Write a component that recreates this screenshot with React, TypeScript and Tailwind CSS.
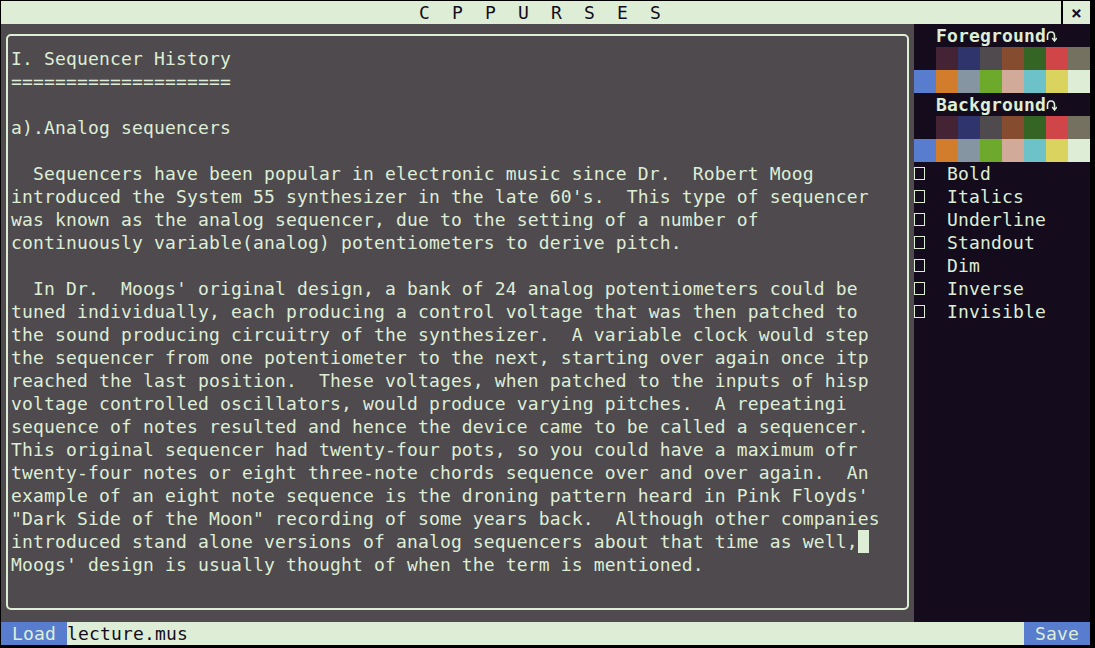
import React from 'react';

const lines = [
  'I. Sequencer History',
  '====================',
  '',
  'a).Analog sequencers',
  '',
  '  Sequencers have been popular in electronic music since Dr.  Robert Moog',
  "introduced the System 55 synthesizer in the late 60's.  This type of sequencer",
  'was known as the analog sequencer, due to the setting of a number of',
  'continuously variable(analog) potentiometers to derive pitch.',
  '',
  "  In Dr.  Moogs' original design, a bank of 24 analog potentiometers could be",
  'tuned individually, each producing a control voltage that was then patched to',
  'the sound producing circuitry of the synthesizer.  A variable clock would step',
  'the sequencer from one potentiometer to the next, starting over again once itp',
  'reached the last position.  These voltages, when patched to the inputs of hisp',
  'voltage controlled oscillators, would produce varying pitches.  A repeatingi',
  'sequence of notes resulted and hence the device came to be called a sequencer.',
  'This original sequencer had twenty-four pots, so you could have a maximum ofr',
  'twenty-four notes or eight three-note chords sequence over and over again.  An',
  "example of an eight note sequence is the droning pattern heard in Pink Floyds'",
  '"Dark Side of the Moon" recording of some years back.  Although other companies',
  'introduced stand alone versions of analog sequencers about that time as well,',
  "Moogs' design is usually thought of when the term is mentioned.",
];

const CURSOR_LINE = 21;

const darkRow = ['#140c1c', '#442434', '#30346d', '#4e4a4e', '#854c30', '#346524', '#d04648', '#757161'];
const lightRow = ['#597dce', '#d27d2c', '#8595a1', '#6daa2c', '#d2aa99', '#6dc2ca', '#dad45e', '#deeed6'];

const attrs = ['Bold', 'Italics', 'Underline', 'Standout', 'Dim', 'Inverse', 'Invisible'];

const mono = { fontFamily: '"DejaVu Sans Mono", "Liberation Mono", monospace' };

const CurlArrow = () => (
  <svg width="11" height="23" viewBox="0 0 11 23" className="shrink-0">
    <path d="M1.5 16 V12 Q1.5 8 5 8 Q8.5 8 8.5 12 V16" fill="none" stroke="#deeed6" strokeWidth="1.6" />
    <path d="M6.2 14 L8.5 17 L10.8 14" fill="none" stroke="#deeed6" strokeWidth="1.4" />
  </svg>
);

const PaletteBlock = ({ label }: { label: string }) => (
  <>
    <div className="h-[23px] flex items-center pl-[22px] font-bold">
      <span className="leading-[23px]">{label}</span>
      <CurlArrow />
    </div>
    <div className="flex h-[23px]">
      {darkRow.map(c => (
        <div key={c} className="w-[22px] h-[23px]" style={{ backgroundColor: c }} />
      ))}
    </div>
    <div className="flex h-[23px]">
      {lightRow.map(c => (
        <div key={c} className="w-[22px] h-[23px]" style={{ backgroundColor: c }} />
      ))}
    </div>
  </>
);

export default function App() {
  return (
    <div
      className="w-[1095px] h-[648px] bg-black pl-[1px] pt-[1px] pr-[5px] pb-[3px] text-[18px] tracking-[0.16px] text-[#deeed6]"
      style={mono}
    >
      <div className="flex flex-col w-[1089px] h-[644px]">
        {/* title bar */}
        <div className="flex h-[23px] bg-[#deeed6] text-[#140c1c]">
          <div className="flex-1 pl-[418px] leading-[23px] whitespace-pre">C  P  P  U  R  S  E  S</div>
          <div className="w-[2px] bg-black" />
          <div className="w-[27px] flex items-center justify-center font-bold leading-[23px]">×</div>
        </div>

        {/* middle */}
        <div className="flex h-[598px]">
          <div className="w-[913px] bg-[#4e4a4e] pl-[5px] pr-[5px] pt-[10px] pb-[12px]">
            <div className="h-full border-2 border-[#deeed6] rounded-[5px] pl-[3px] pt-[11px]">
              {lines.map((l, i) => (
                <div key={i} className="h-[23px] leading-[23px] whitespace-pre">
                  {l}
                  {i === CURSOR_LINE && (
                    <span className="inline-block w-[11px] h-[23px] align-top bg-[#deeed6]" />
                  )}
                </div>
              ))}
            </div>
          </div>

          <div className="w-[176px] bg-[#140c1c]">
            <PaletteBlock label="Foreground" />
            <PaletteBlock label="Background" />
            {attrs.map(a => (
              <div key={a} className="h-[23px] flex items-center">
                <div className="w-[11px] flex justify-center">
                  <span className="block w-[11px] h-[13px] border-[1.5px] border-[#deeed6]" />
                </div>
                <span className="pl-[22px] leading-[23px]">{a}</span>
              </div>
            ))}
          </div>
        </div>

        {/* bottom bar */}
        <div className="flex h-[23px] bg-[#deeed6] leading-[23px]">
          <div className="w-[66px] bg-[#597dce] whitespace-pre"> Load </div>
          <div className="flex-1 text-[#140c1c] whitespace-pre">lecture.mus</div>
          <div className="w-[66px] bg-[#597dce] whitespace-pre"> Save </div>
        </div>
      </div>
    </div>
  );
}
